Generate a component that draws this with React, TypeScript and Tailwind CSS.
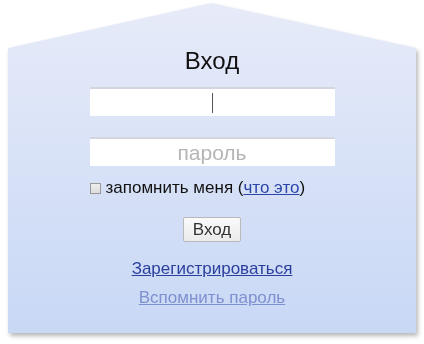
export default function App() {
  return (
    <div className="w-[424px] h-[344px] bg-white font-['Liberation_Sans',Arial,sans-serif]">
      <div className="ml-[8px] pt-[3px] w-[408px] h-[333px] drop-shadow-[2px_3px_2px_rgba(0,0,0,0.28)]">
        {/* Панель в форме домика */}
        <div className="w-[408px] h-[330px] bg-gradient-to-b from-[#e7ebf9] to-[#c8d8f5] [clip-path:polygon(0_45px,203px_0,408px_45px,408px_330px,0_330px)] flex flex-col items-center">
          <h1 className="mt-[44px] h-[28px] leading-[28px] text-[24px] text-[#111]">Вход</h1>

          <div className="mt-[12px] w-[245px] h-[29px] bg-white border-t-2 border-[#d3d6de] flex items-center justify-center">
            <span className="w-px h-[20px] bg-[#555]" />
          </div>

          <div className="mt-[21px] w-[245px] h-[29px] bg-white border-t-2 border-[#d3d6de] flex items-center justify-center text-[21px] text-[#b5b5b5]">
            пароль
          </div>

          <label className="mt-[12px] w-[245px] flex items-center gap-[5px] text-[17px] text-[#111] leading-[20px]">
            <span className="w-[11px] h-[11px] border border-[#999] bg-gradient-to-b from-[#eee] to-[#ddd]" />
            <span>
              запомнить меня (<a className="text-[#2b46a8] underline">что это</a>)
            </span>
          </label>

          <button className="mt-[19px] w-[58px] h-[25px] border border-[#b9b9b9] rounded-[2px] bg-gradient-to-b from-[#fafafa] to-[#ebebeb] text-[17px] leading-[20px] text-[#333]">
            Вход
          </button>

          <a className="mt-[17px] text-[17px] leading-[20px] text-[#2a3e9e] underline">Зарегистрироваться</a>
          <a className="mt-[9px] text-[17px] leading-[20px] text-[#7d90cf] underline">Вспомнить пароль</a>
        </div>
      </div>
    </div>
  );
}
